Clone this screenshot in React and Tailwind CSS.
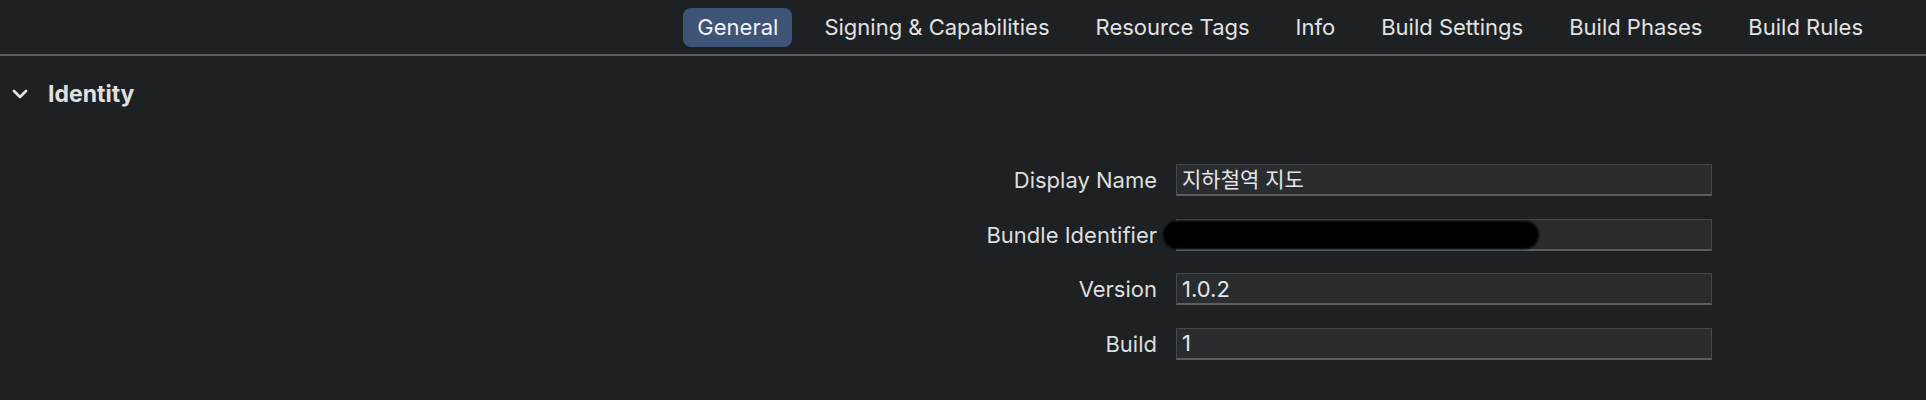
import React from "react";

const tabs = [
  "General",
  "Signing & Capabilities",
  "Resource Tags",
  "Info",
  "Build Settings",
  "Build Phases",
  "Build Rules",
];

const font = { fontFamily: 'Inter, "Noto Sans CJK KR", sans-serif' };

function Field({ label, value, redacted, cjk }) {
  return (
    <div className="flex items-center h-[32px]">
      <div className="w-[1157px] text-right text-[22px] text-[#dedede] leading-none">
        {label}
      </div>
      <div
        className={
          "relative ml-[19px] w-[536px] h-[32px] bg-[#2a2d30] border border-[#45484b] border-b-2 border-b-[#5b5e61] flex items-center pl-[5px] text-[#e6e6e6] leading-none " +
          (cjk ? "text-[21px]" : "text-[22px]")
        }
      >
        {value}
        {redacted && (
          <div className="absolute left-[-14px] top-[1px] w-[376px] h-[28px] bg-black rounded-[14px] blur-[1px]" />
        )}
      </div>
    </div>
  );
}

export default function App() {
  return (
    <div className="w-[1926px] h-[400px] bg-[#1e2123] overflow-hidden" style={font}>
      <div className="h-[54px] flex items-center justify-end pr-[49px] gap-[18px]">
        {tabs.map((t, i) => (
          <div
            key={t}
            className={
              "h-[39px] px-[14px] flex items-center rounded-[8px] text-[22px] leading-none " +
              (i === 0 ? "bg-[#3e5477] text-[#f2f2f2]" : "text-[#e2e2e2]")
            }
          >
            {t}
          </div>
        ))}
      </div>
      <div className="h-[2px] bg-[#5a5d60]" />
      <div className="h-[76px] flex items-center pl-[12px]">
        <svg width="16" height="10" viewBox="0 0 16 10" className="mr-[20px]">
          <polyline
            points="2,2 8,8 14,2"
            fill="none"
            stroke="#e6e6e6"
            strokeWidth="2.6"
            strokeLinecap="round"
            strokeLinejoin="round"
          />
        </svg>
        <span className="text-[23px] font-bold text-[#e0e0e0] leading-none">Identity</span>
      </div>
      <div className="mt-[32px] flex flex-col gap-[22.5px]">
        <Field label="Display Name" value="지하철역 지도" cjk />
        <Field label="Bundle Identifier" value="" redacted />
        <Field label="Version" value="1.0.2" />
        <Field label="Build" value="1" />
      </div>
    </div>
  );
}
